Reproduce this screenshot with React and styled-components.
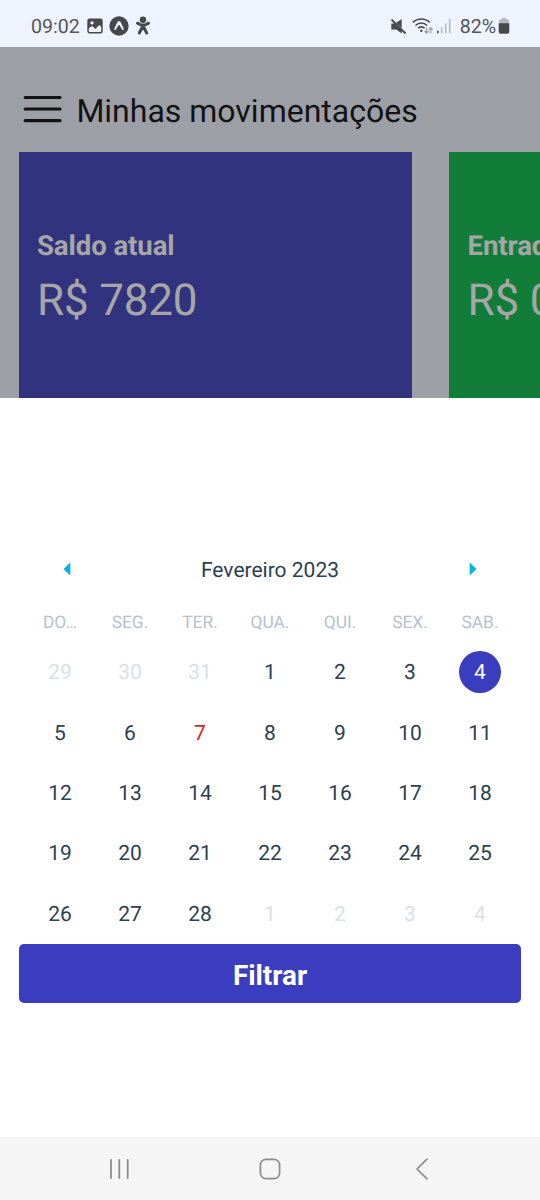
import React from 'react';
import styled, { createGlobalStyle } from 'styled-components';

const GlobalStyle = createGlobalStyle`
  * { box-sizing: border-box; }
  body { margin: 0; background: #fff; font-family: Roboto, sans-serif; text-rendering: geometricPrecision; }
`;

const Screen = styled.div`
  width: 540px;
  height: 1200px;
  display: flex;
  flex-direction: column;
  overflow: hidden;
  background: #fff;
`;

const StatusBar = styled.div`
  height: 46.5px;
  flex: none;
  display: flex;
  justify-content: space-between;
  align-items: center;
  padding: 6px 30px 0 31px;
  background: #eff3fe;
  color: #54575c;
`;

const StatusGroup = styled.div`
  display: flex;
  align-items: center;
`;

const StatusText = styled.span`
  padding-top: 2px;
  font-size: 19.6px;
  line-height: 24px;
  margin-left: ${(p) => p.$gap || 0}px;
`;

const StatusIcon = styled.svg`
  display: block;
  flex: none;
  margin-left: ${(p) => p.$gap || 0}px;
`;

const Backdrop = styled.main`
  height: 351.5px;
  flex: none;
  display: flex;
  flex-direction: column;
  background: #9d9fa7;
  overflow: hidden;
`;

const Header = styled.header`
  height: 105.5px;
  flex: none;
  display: flex;
  align-items: center;
  padding: 24px 0 0 23px;
  gap: 14.4px;
`;

const MenuIcon = styled.svg`
  display: block;
  margin-top: -4px;
`;

const Title = styled.h1`
  margin: 0;
  font-weight: 400;
  font-size: 32px;
  line-height: 40px;
  color: #131314;
  white-space: nowrap;
`;

const Cards = styled.div`
  display: flex;
  gap: 37.3px;
  padding-left: 18.7px;
  flex: 1;
`;

const Card = styled.section`
  width: 393.3px;
  flex: none;
  padding: 76.5px 18.3px 0;
  background: ${(p) => p.$color};
  color: #a6a6a6;
`;

const CardLabel = styled.div`
  font-size: 27.6px;
  line-height: 34px;
  font-weight: 700;
  letter-spacing: -0.1px;
`;

const CardValue = styled.div`
  margin-top: 10px;
  font-size: 44px;
  line-height: 54px;
  letter-spacing: -0.2px;
`;

const Sheet = styled.section`
  height: 739px;
  flex: none;
  padding: 146px 18.7px 0;
`;

const Calendar = styled.div`
  padding: 0 6.3px;
`;

const MonthBar = styled.div`
  height: 52px;
  display: flex;
  align-items: center;
  justify-content: space-between;
  padding: 0 38px;
`;

const MonthName = styled.div`
  padding-top: 2px;
  font-size: 21px;
  line-height: 25px;
  color: #2d4150;
`;

const Arrow = styled.svg`
  display: block;
  margin-top: -2px;
`;

const Week = styled.div`
  display: grid;
  grid-template-columns: repeat(7, 1fr);
  justify-items: center;
  align-items: center;
  height: ${(p) => p.$height}px;
`;

const WeekDay = styled.div`
  padding-top: 8px;
  font-size: 17.4px;
  line-height: 22px;
  color: #b6c1cd;
`;

const dayColors = { normal: '#2d4150', muted: '#d9e1e8', marked: '#e01e1e', selected: '#fff' };

const Day = styled.div`
  width: 42px;
  height: 42px;
  display: flex;
  align-items: center;
  justify-content: center;
  padding-top: 2px;
  border-radius: 50%;
  font-size: 21px;
  color: ${(p) => dayColors[p.$kind]};
  background: ${(p) => (p.$kind === 'selected' ? '#3b3dbf' : 'transparent')};
`;

const FilterButton = styled.button`
  display: block;
  width: 100%;
  height: 58.7px;
  padding: 5px 0 0;
  border: 0;
  border-radius: 5px;
  background: #3b3dbf;
  color: #fff;
  font: 700 27.8px/34px Roboto, sans-serif;
`;

const NavBar = styled.nav`
  height: 63px;
  flex: none;
  display: flex;
  align-items: center;
  justify-content: space-between;
  padding: 1px 111px 0 108px;
  background: #f5f5f5;
`;

const NavIcon = styled.svg`
  display: block;
  margin-right: ${(p) => p.$shift || 0}px;
`;

const weekDays = ['DO…', 'SEG.', 'TER.', 'QUA.', 'QUI.', 'SEX.', 'SAB.'];

const weeks = [
  [29, 30, 31, 1, 2, 3, 4],
  [5, 6, 7, 8, 9, 10, 11],
  [12, 13, 14, 15, 16, 17, 18],
  [19, 20, 21, 22, 23, 24, 25],
  [26, 27, 28, 1, 2, 3, 4],
];

function dayKind(week, day) {
  if ((week === 0 && day > 20) || (week === 4 && day < 10)) return 'muted';
  if (week === 0 && day === 4) return 'selected';
  if (day === 7) return 'marked';
  return 'normal';
}

export default function App() {
  return (
    <Screen>
      <GlobalStyle />
      <StatusBar>
        <StatusGroup>
          <StatusText>09:02</StatusText>
          <StatusIcon $gap={6} width="18" height="18" viewBox="0 0 18 18">
            <path fill="#46484b" fillRule="evenodd" d="M3.5 1.5h11a2.2 2.2 0 0 1 2.2 2.2v10.6a2.2 2.2 0 0 1-2.2 2.2h-11a2.2 2.2 0 0 1-2.2-2.2V3.7a2.2 2.2 0 0 1 2.2-2.2zM2.8 11.3v2.7a1 1 0 0 0 1 1h10.4a1 1 0 0 0 1-1V9.9l-2-2-3.8 4.2-3.2-3.2zM6 4.2a1.700 1.700 0 1 0 0 3.400 1.700 1.700 0 0 0 0-3.400z" />
          </StatusIcon>
          <StatusIcon $gap={5} width="20" height="20" viewBox="0 0 20 20">
            <circle cx="10" cy="10" r="9.7" fill="#46484b" />
            <path fill="#eff3fe" d="M9.3 5.3h1.4c.3 0 .5.2.7.5l3.4 7c.4.8-.8 1.7-1.5.9L10.500 9.200c-.3-.4-.7-.4-1 0l-2.800 4.500c-.7.800-1.900-.1-1.500-.9l3.400-7c.2-.3.400-.500.7-.500z" />
          </StatusIcon>
          <StatusIcon $gap={6} width="16" height="20" viewBox="0 0 16 20">
            <circle cx="8" cy="3.8" r="3.2" fill="#46484b" />
            <path fill="none" stroke="#46484b" strokeWidth="3" strokeLinecap="round" strokeLinejoin="round" d="M2.5 7.2L6 9h4l3.5-1.8M8 9v3.5M6.900 12L4.300 17M9.100 12l2.600 5" />
          </StatusIcon>
        </StatusGroup>
        <StatusGroup>
          <StatusIcon width="17" height="17" viewBox="0 0 17 17">
            <path fill="#46484b" d="M1.300 5.500h3.400l7 7v3L6.300 11.600H1.300zM6.200 4.700L11.700 1v9z" />
            <path stroke="#46484b" strokeWidth="1.800" d="M1.500 1.500l14 14" />
          </StatusIcon>
          <StatusIcon $gap={5} width="22" height="18" viewBox="0 0 22 18">
            <g fill="none" stroke="#46484b" strokeWidth="1.600">
              <path d="M.8 5.400c4.800-4.600 12.200-4.600 17 0" />
              <path d="M3.500 8.500c3.300-3.300 8.300-3.300 11.600 0" />
              <path d="M6 11.300c1.900-1.900 4.700-1.900 6.600 0" />
            </g>
            <circle cx="9.300" cy="13.800" r="1.200" fill="#46484b" />
            <path fill="none" stroke="#9c9fa7" strokeWidth="1.200" d="M14.500 10.500v5.500M12.500 14l2 2.200 2-2.200M18.700 16.200v-5.500M16.700 12.900l2-2.200 2 2.200" />
          </StatusIcon>
          <StatusIcon $gap={2} width="16" height="18" viewBox="0 0 16 18">
            <path stroke="#46484b" strokeWidth="1.600" strokeLinecap="round" d="M1.800 14.200v1.500" />
            <path stroke="#b7bac3" strokeWidth="1.600" strokeLinecap="round" d="M5.700 10.700v5M9.700 7v8.700M13.700 2.500v13.200" />
          </StatusIcon>
          <StatusText $gap={7.5}>82%</StatusText>
          <StatusIcon $gap={2} width="12" height="18" viewBox="0 0 12 18">
            <path fill="#b5b8c0" d="M4 1h4v1.200h1.500a1.500 1.500 0 0 1 1.500 1.500V7H1V3.700a1.500 1.500 0 0 1 1.500-1.500H4z" />
            <path fill="#46484b" d="M.7 6.300h10.600v8.500a2 2 0 0 1-2 2H2.700a2 2 0 0 1-2-2z" />
          </StatusIcon>
        </StatusGroup>
      </StatusBar>

      <Backdrop>
        <Header>
          <MenuIcon width="39" height="30" viewBox="0 0 39 30">
            <path stroke="#131314" strokeWidth="3.200" strokeLinecap="round" d="M2.200 3.500h34.800M2.200 15h34.800M2.200 26.700h34.800" />
          </MenuIcon>
          <Title>Minhas movimentações</Title>
        </Header>
        <Cards>
          <Card $color="#32337f">
            <CardLabel>Saldo atual</CardLabel>
            <CardValue>R$ 7820</CardValue>
          </Card>
          <Card $color="#117d39">
            <CardLabel>Entradas</CardLabel>
            <CardValue>R$ 0</CardValue>
          </Card>
        </Cards>
      </Backdrop>

      <Sheet>
        <Calendar>
          <MonthBar>
            <Arrow width="8" height="14" viewBox="0 0 8 14"><path fill="#00b4eb" d="M7.300.5v13L.5 7z" /></Arrow>
            <MonthName>Fevereiro 2023</MonthName>
            <Arrow width="8" height="14" viewBox="0 0 8 14"><path fill="#00b4eb" d="M.7.5v13L7.500 7z" /></Arrow>
          </MonthBar>
          <Week $height={46}>
            {weekDays.map((d) => <WeekDay key={d}>{d}</WeekDay>)}
          </Week>
          {weeks.map((week, w) => (
            <Week key={w} $height={60.4}>
              {week.map((d) => <Day key={d} $kind={dayKind(w, d)}>{d}</Day>)}
            </Week>
          ))}
        </Calendar>
        <FilterButton>Filtrar</FilterButton>
      </Sheet>

      <NavBar>
        <NavIcon width="22" height="22" viewBox="0 0 22 22">
          <path stroke="#8c8c8c" strokeWidth="1.800" strokeLinecap="round" d="M3 2v18M11.300 2v18M19.700 2v18" />
        </NavIcon>
        <NavIcon $shift={5} width="22" height="22" viewBox="0 0 22 22">
          <rect x="1.400" y="1.400" width="19.200" height="19.200" rx="5.500" fill="none" stroke="#8c8c8c" strokeWidth="1.700" />
        </NavIcon>
        <NavIcon width="14" height="22" viewBox="0 0 14 22">
          <path fill="none" stroke="#8c8c8c" strokeWidth="1.700" strokeLinecap="round" strokeLinejoin="round" d="M12 1.200L2 11l10 9.800" />
        </NavIcon>
      </NavBar>
    </Screen>
  );
}
